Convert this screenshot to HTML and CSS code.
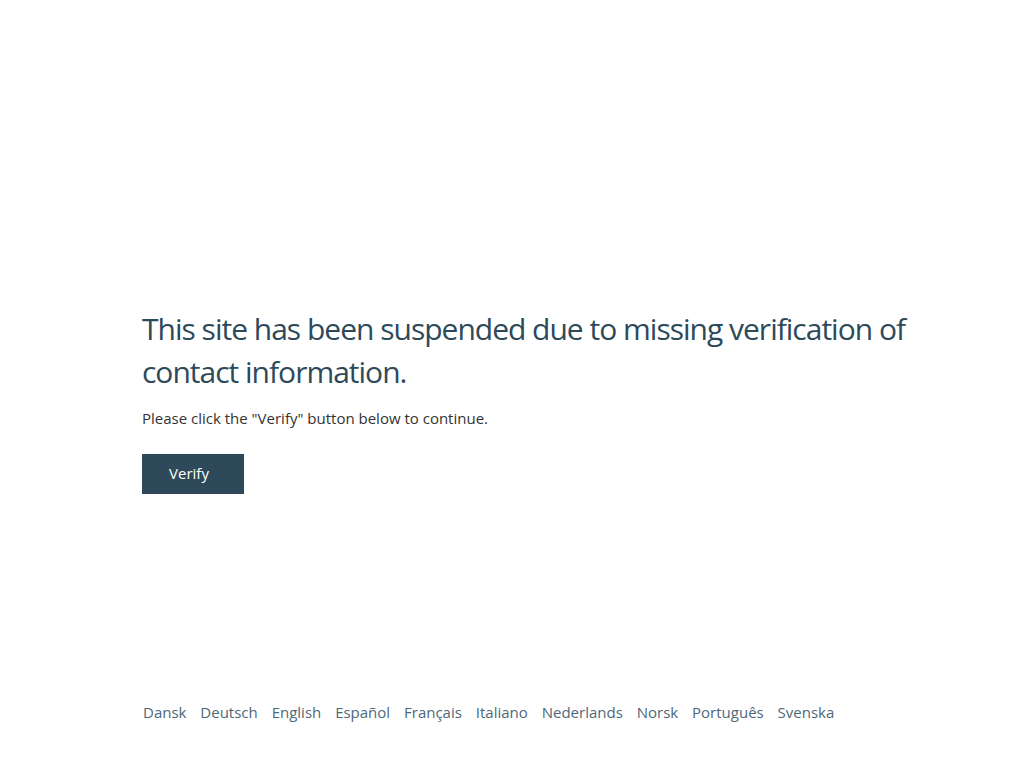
FILE: index.html
```html
<!DOCTYPE html>
<html lang="en">
<head>
<meta charset="utf-8">
<title>Site suspended</title>
<link rel="stylesheet" href="styles.css">
</head>
<body>
<div class="page">
  <main class="content">
    <h1 class="title">This site has been suspended due to missing verification of contact information.</h1>
    <p class="lead">Please click the "Verify" button below to continue.</p>
    <button class="btn" type="button">Verify</button>
  </main>
  <footer class="langs">
    <a href="#">Dansk</a>
    <a href="#">Deutsch</a>
    <a href="#">English</a>
    <a href="#">Español</a>
    <a href="#">Français</a>
    <a href="#">Italiano</a>
    <a href="#">Nederlands</a>
    <a href="#">Norsk</a>
    <a href="#">Português</a>
    <a href="#">Svenska</a>
  </footer>
</div>
</body>
</html>
```
FILE: styles.css
```css
html, body {
  margin: 0;
  padding: 0;
  background: #fff;
}
body {
  font-family: "Open Sans", "Noto Sans", sans-serif;
  color: #2e4a5a;
}
.page {
  box-sizing: border-box;
  width: 1024px;
  padding: 0 100px 0 142px;
  height: 768px;
  display: flex;
  flex-direction: column;
}
.content {
  padding-top: 307px;
}
.title {
  font-size: 30px;
  font-weight: 400;
  line-height: 43px;
  margin: 0;
  letter-spacing: -1px;
  color: #2e4a5a;
}
.lead {
  font-size: 15px;
  line-height: 22px;
  margin: 14px 0 0;
  color: #333;
}
.btn {
  margin-top: 25px;
  width: 102px;
  height: 40px;
  border: 0;
  background: #2e4a5a;
  color: #fff;
  font-family: inherit;
  font-size: 15px;
  padding: 0 8px 2px 0;
  cursor: pointer;
}
.langs {
  margin-top: auto;
  padding-bottom: 45px;
  display: flex;
  gap: 13.9px;
  padding-left: 1px;
}
.langs a {
  font-size: 15px;
  color: #4d6878;
  text-decoration: none;
  line-height: 22px;
}
```
